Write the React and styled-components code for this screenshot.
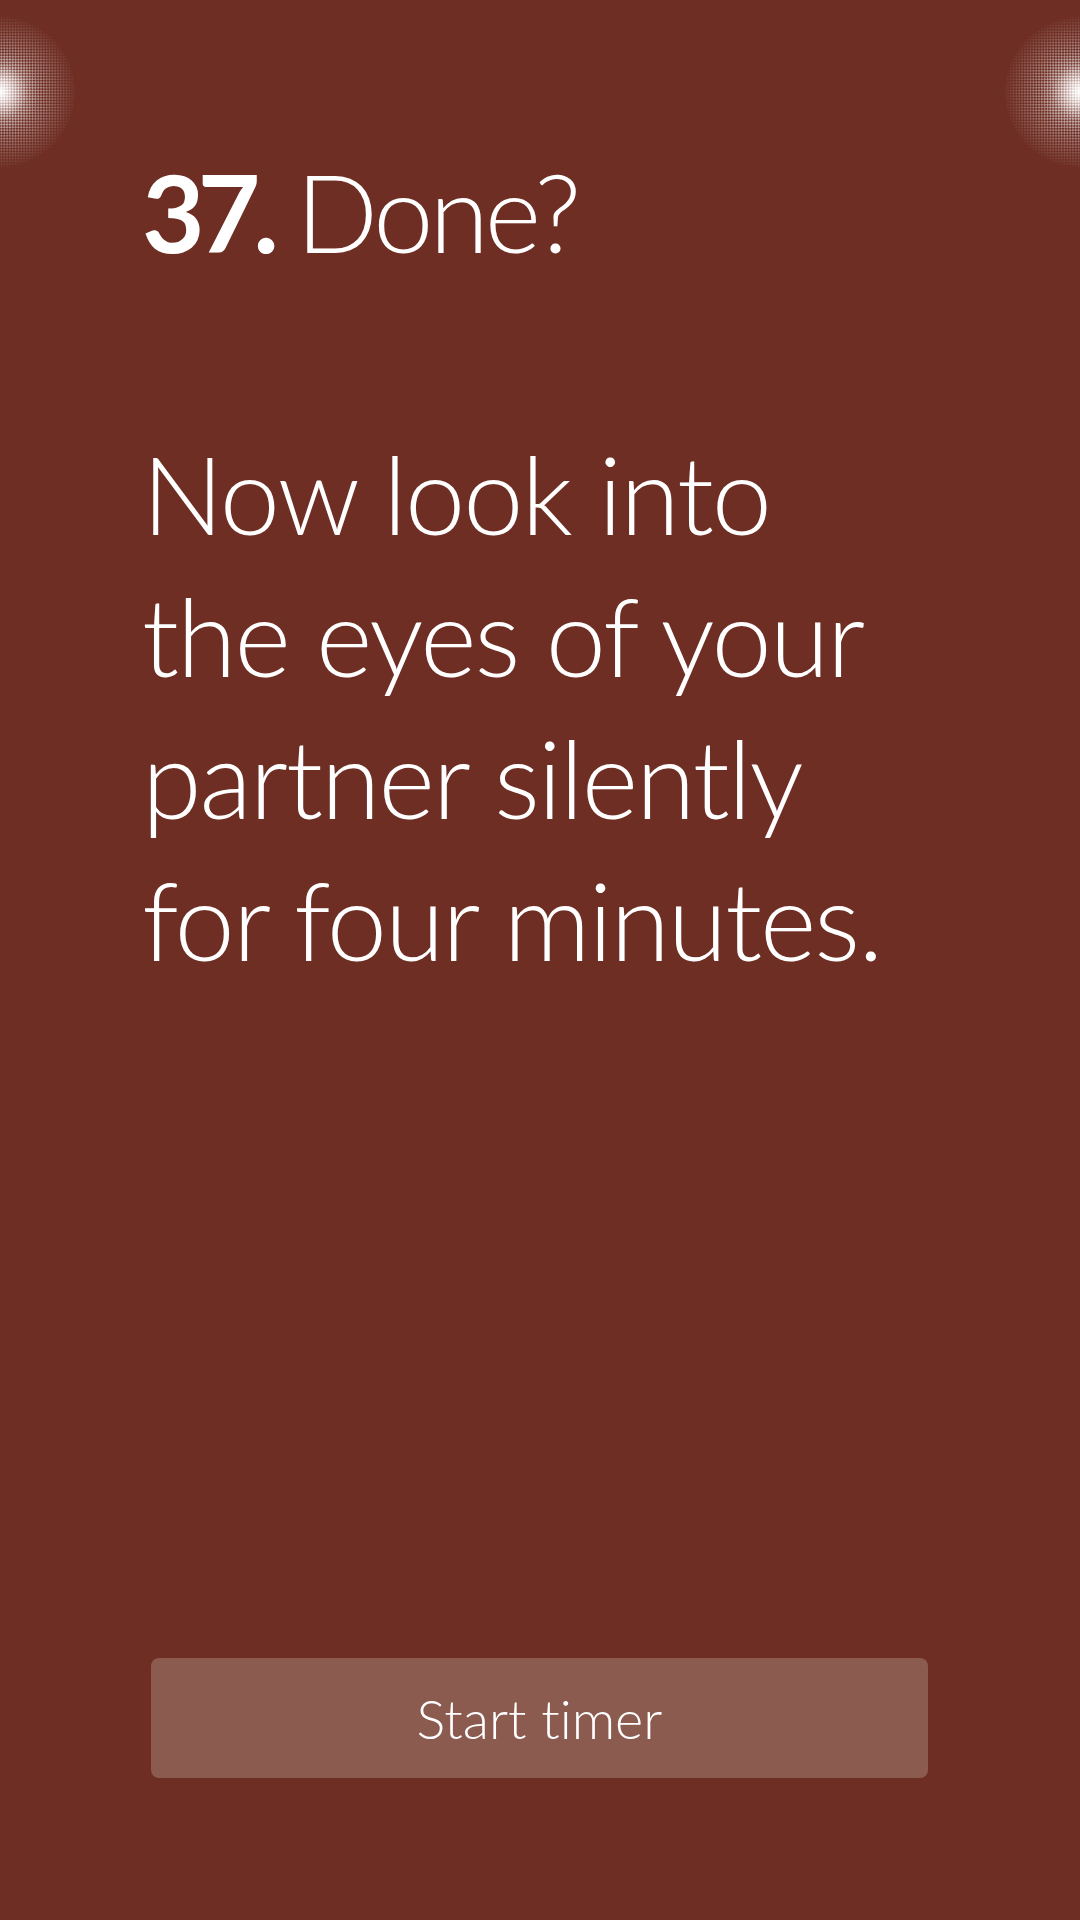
import React from 'react';
import styled, {createGlobalStyle} from 'styled-components';

const Global = createGlobalStyle`
    html, body
    {
        margin: 0;
        padding: 0;
        background: #6e2e24;
    }
    *
    {
        box-sizing: border-box;
    }
`

const Screen = styled.div`
    background: #6e2e24;
    color: #fff;
    display: flex;
    flex-direction: column;
    font-family: "Lato", "Open Sans", sans-serif;
    font-variant-ligatures: none;
    height: 1920px;
    overflow: hidden;
    padding: 0 152px 142px 142px;
    position: relative;
    width: 1080px;
`

// the two little light flares in the top corners
const Glow = styled.div`
    background: radial-gradient(circle, rgba(255,255,255,1) 0%, rgba(255,255,255,.7) 9%, rgba(255,255,255,.12) 26%, rgba(255,255,255,0) 38%);
    border-radius: 50%;
    height: 150px;
    position: absolute;
    top: 17px;
    width: 150px;
    ${({side}) => side === 'left' ? 'left: -75px;' : 'right: -75px;'}

    &::after
    {
        background: radial-gradient(circle, rgba(255,255,255,.95) 0%, rgba(255,255,255,.55) 30%, rgba(255,255,255,.22) 55%, rgba(255,255,255,0) 74%);
        border-radius: 50%;
        content: '';
        inset: 0;
        -webkit-mask-image: repeating-conic-gradient(#000 0deg 90deg, transparent 90deg 180deg);
        -webkit-mask-size: 4px 4px;
        mask-image: repeating-conic-gradient(#000 0deg 90deg, transparent 90deg 180deg);
        mask-size: 4px 4px;
        position: absolute;
        transform: rotate(45deg);
    }
`

const Title = styled.h1`
    font-size: 108px;
    font-weight: 300;
    letter-spacing: -4px;
    line-height: 1;
    margin: 157px 0 0 0;

    b
    {
        font-weight: 700;
        letter-spacing: -7px;
        margin-right: 24px;
    }
`

const Question = styled.p`
    flex: 1;
    font-size: 108px;
    font-weight: 300;
    letter-spacing: -2px;
    line-height: 142px;
    margin: 157px 0 0 0;
    white-space: nowrap;
`

const TimerButton = styled.button`
    background: #8c5b50;
    border: none;
    border-radius: 8px;
    color: #fff;
    font-family: inherit;
    font-size: 54px;
    font-variant-ligatures: none;
    font-weight: 300;
    height: 120px;
    margin-left: 9px;
    width: 777px;
`

const lines = ['Now look into', 'the eyes of your', 'partner silently', 'for four minutes.'];

export default function App() {
    return (
        <>
            <Global/>
            <Screen>
                <Glow side="left"/>
                <Glow side="right"/>
                <Title><b>37.</b>Done?</Title>
                <Question>
                    {lines.map((line, i) => (
                        <React.Fragment key={i}>
                            {line}
                            {i < lines.length - 1 && <br/>}
                        </React.Fragment>
                    ))}
                </Question>
                <TimerButton>Start timer</TimerButton>
            </Screen>
        </>
    );
}
